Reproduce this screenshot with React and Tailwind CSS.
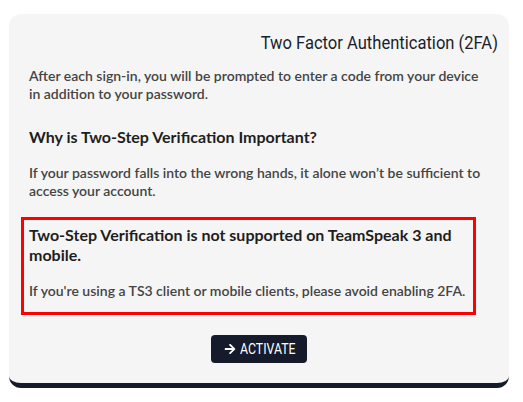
export default function App() {
  return (
    <div className="min-h-[402px] w-[523px] bg-white pt-[14px] pl-[9px]" style={{ fontFamily: "Lato, 'Noto Sans', sans-serif" }}>
      <div className="w-[500px] rounded-[12px] border-b-[5px] border-[#161b2b] bg-[#f5f5f5] pb-[20px]">
        <div className="flex justify-end pr-[11px] pt-[17px]">
          <h2 className="origin-right scale-x-[0.92] text-[18px] leading-[24px] text-[#1a1e2c]" style={{ fontFamily: "Roboto, sans-serif" }}>
            Two Factor Authentication (2FA)
          </h2>
        </div>
        <div className="px-[20px]">
          <p className="mt-[12px] text-[14px] font-semibold leading-[18px] text-[#444]">
            After each sign-in, you will be prompted to enter a code from your device in addition to your password.
          </p>
          <h3 className="mt-[24px] text-[16px] font-bold leading-[20px] text-[#1e1e1e]">
            Why is Two-Step Verification Important?
          </h3>
          <p className="mt-[17px] text-[14px] font-semibold leading-[18px] text-[#444]">
            If your password falls into the wrong hands, it alone won’t be sufficient to access your account.
          </p>
        </div>
        <div className="ml-[12px] mt-[17px] w-[455px] border-[3px] border-[#ff0000] pb-[12px] pl-[5px] pr-[5px] pt-[5px]">
          <h3 className="text-[16px] font-bold leading-[20px] text-[#1e1e1e]">
            Two-Step Verification is not supported on TeamSpeak 3 and mobile.
          </h3>
          <p className="mt-[17px] text-[14px] font-semibold leading-[18px] text-[#444]">
            If you're using a TS3 client or mobile clients, please avoid enabling 2FA.
          </p>
        </div>
        <div className="mt-[20px] flex justify-center">
          <button className="flex h-[28px] w-[96px] items-center gap-[4px] rounded-[4px] bg-[#161b2b] pl-[13px] text-[14px] text-white" style={{ fontFamily: "Roboto, sans-serif" }}>
            <svg width="12" height="12" viewBox="0 0 448 512" fill="currentColor">
              <path d="M190.5 66.9l22.2-22.2c9.4-9.4 24.6-9.4 33.9 0L441 239c9.4 9.4 9.4 24.6 0 33.9L246.6 467.3c-9.4 9.4-24.6 9.4-33.9 0l-22.2-22.2c-9.5-9.5-9.3-25 .4-34.3L311.4 296H24c-13.3 0-24-10.7-24-24v-32c0-13.3 10.7-24 24-24h287.4L190.9 101.2c-9.8-9.3-10-24.8-.4-34.3z" />
            </svg>
            <span className="inline-block origin-left scale-x-[0.88]">ACTIVATE</span>
          </button>
        </div>
      </div>
    </div>
  );
}
